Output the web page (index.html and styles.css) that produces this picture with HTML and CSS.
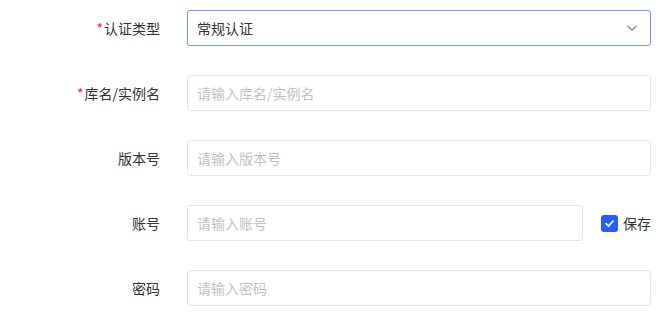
FILE: index.html
```html
<!DOCTYPE html>
<html lang="zh-CN">
<head>
  <meta charset="UTF-8" />
  <meta name="viewport" content="width=device-width, initial-scale=1.0"/>
  <title>数据源连接</title>
  <link rel="stylesheet" href="styles.css">
</head>
<body>
  <form class="form">
    <div class="form-item">
      <label class="form-label"><span class="required">*</span>认证类型</label>
      <div class="form-control">
        <div class="select is-focus">
          <span class="select-value">常规认证</span>
          <svg class="select-arrow" width="12" height="12" viewBox="0 0 12 12">
            <path d="M1.8 4.2 L6 8 L10.2 4.2" fill="none" stroke="#8a8f99" stroke-width="1.4" stroke-linecap="round" stroke-linejoin="round"/>
          </svg>
        </div>
      </div>
    </div>

    <div class="form-item">
      <label class="form-label"><span class="required">*</span>库名/实例名</label>
      <div class="form-control">
        <input class="input" type="text" placeholder="请输入库名/实例名" />
      </div>
    </div>

    <div class="form-item">
      <label class="form-label">版本号</label>
      <div class="form-control">
        <input class="input" type="text" placeholder="请输入版本号" />
      </div>
    </div>

    <div class="form-item">
      <label class="form-label">账号</label>
      <div class="form-control">
        <input class="input" type="text" placeholder="请输入账号" />
        <label class="checkbox">
          <span class="checkbox-box">
            <svg width="11" height="11" viewBox="0 0 12 12">
              <path d="M2.2 6.2 L5 8.8 L9.8 3.4" fill="none" stroke="#fff" stroke-width="1.8" stroke-linecap="round" stroke-linejoin="round"/>
            </svg>
          </span>
          保存
        </label>
      </div>
    </div>

    <div class="form-item">
      <label class="form-label">密码</label>
      <div class="form-control">
        <input class="input" type="password" placeholder="请输入密码" />
      </div>
    </div>
  </form>
</body>
</html>
```

FILE: styles.css
```css
body {
  margin: 0;
  background-color: #fff;
  color: #333;
  font-family: "Noto Sans CJK SC", "Noto Sans", sans-serif;
  font-size: 14px;
}
.form {
  padding: 10px 16px 0 0;
  display: flex;
  flex-direction: column;
  gap: 29px;
}
.form-item {
  display: flex;
  align-items: center;
  height: 36px;
}
.form-label {
  width: 160px;
  flex-shrink: 0;
  padding-right: 27px;
  text-align: right;
  color: #333;
  box-sizing: content-box;
  line-height: 20px;
}
.required {
  color: #f5222d;
  margin-right: 1px;
}
.form-control {
  flex-grow: 1;
  display: flex;
  align-items: center;
  height: 100%;
}
.input,
.select {
  flex-grow: 1;
  height: 36px;
  box-sizing: border-box;
  border: 1px solid #e4e6ec;
  border-radius: 3px;
  padding: 0 9px;
  font-family: inherit;
  font-size: 14px;
  color: #333;
  outline: none;
  min-width: 0;
}
.input::placeholder {
  color: #bfc1c7;
}
.select {
  display: flex;
  align-items: center;
  justify-content: space-between;
  padding-right: 12px;
}
.select.is-focus {
  border-color: #6f97f7;
}
.checkbox {
  display: flex;
  align-items: center;
  margin-left: 18px;
  color: #333;
  white-space: nowrap;
}
.checkbox-box {
  width: 17px;
  height: 17px;
  margin-right: 5px;
  border-radius: 3px;
  background-color: #2b5cfc;
  display: flex;
  align-items: center;
  justify-content: center;
}
```
